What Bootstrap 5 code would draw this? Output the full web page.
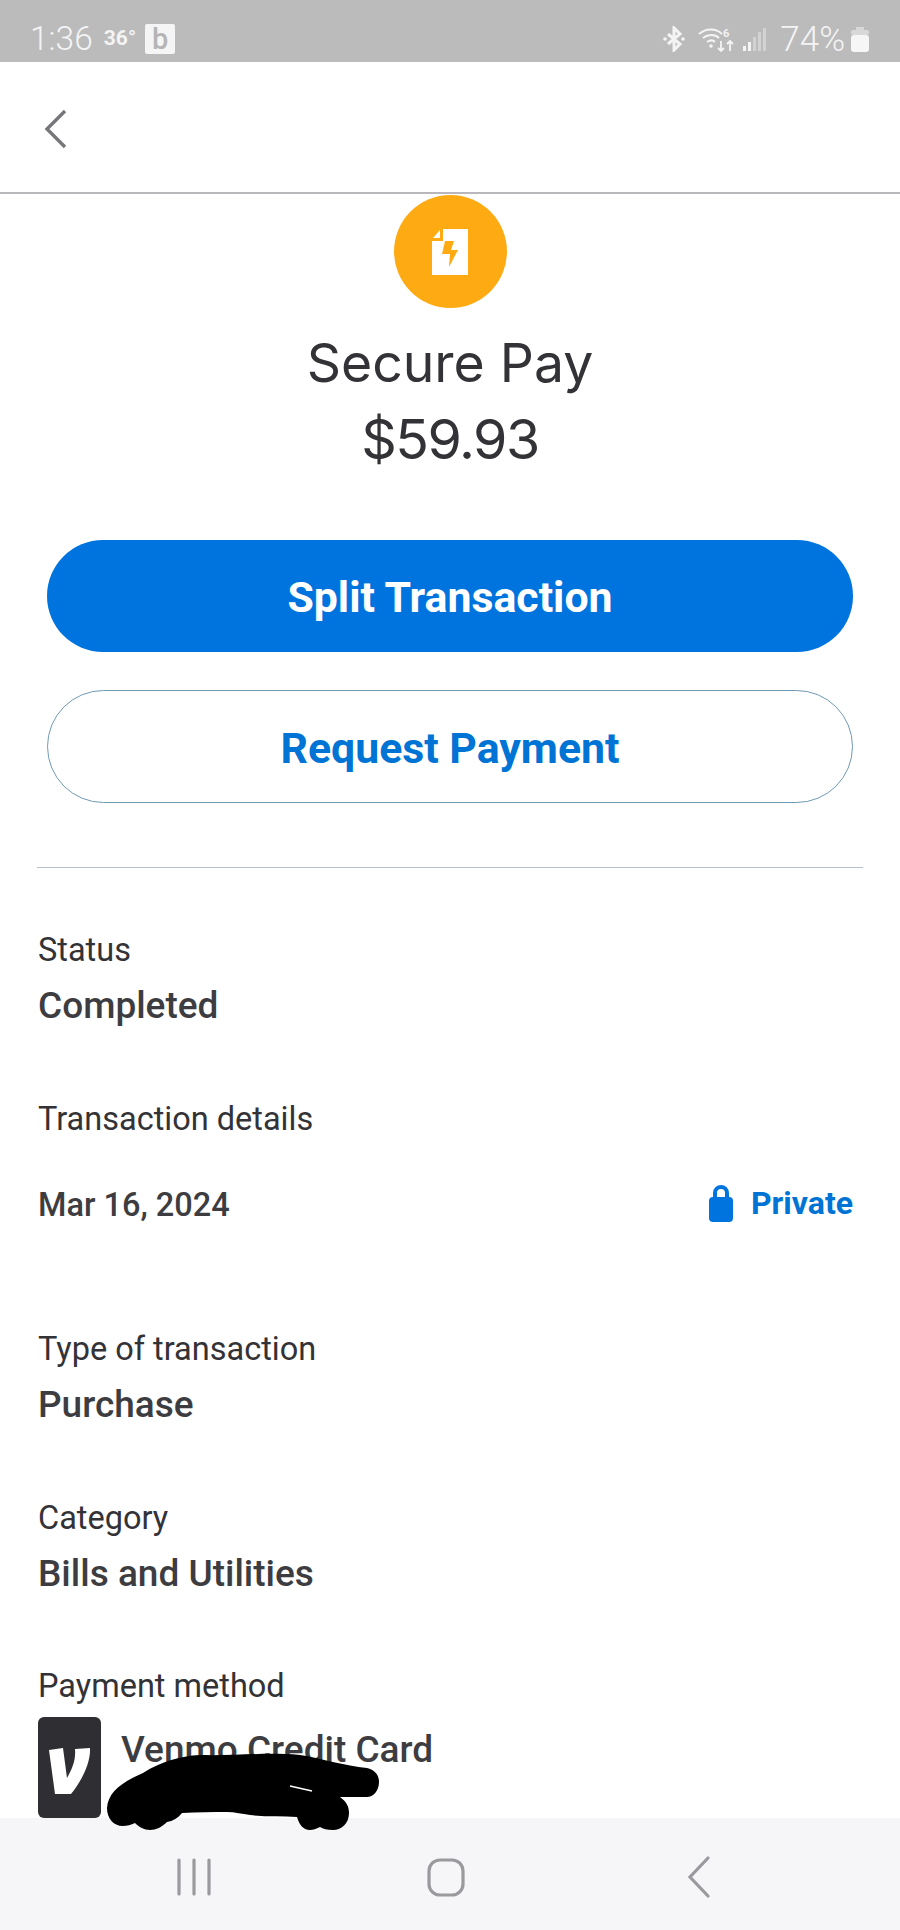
<!DOCTYPE html>
<html lang="en">
<head>
  <meta charset="UTF-8" />
  <meta name="viewport" content="width=device-width, initial-scale=1.0">
  <title>Secure Pay</title>
  <link href="https://cdn.jsdelivr.net/npm/bootstrap@5.3.3/dist/css/bootstrap.min.css" rel="stylesheet">
  <style>
    body { margin: 0; background: #fff; font-family: Roboto, "Liberation Sans", sans-serif; color: #333337; }
    .phone-screen { width: 900px; height: 1930px; overflow: hidden; position: relative; }
    .status-strip { height: 62px; background: #bbbbbb; color: #f4f4f4; padding: 16px 31px 0 30px; flex: none; }
    .clock { font-size: 33.5px; font-weight: 300; margin-right: 11px; line-height: 1; }
    .temp { font-size: 21px; font-weight: 700; margin-right: 9px; }
    .b-tile { width: 30px; height: 30px; background: #f5f5f5; color: #b5b5b5; font-size: 29px; font-weight: 500; line-height: 30px; text-align: center; border-radius: 2px; }
    .wifi-icon { margin: 0 8px 0 13px; }
    .battery-text { font-size: 35px; font-weight: 300; line-height: 1; margin: 0 6px 0 14px; }
    .top-row { height: 132px; border-bottom: 2px solid #b8b8bc; padding: 4px 0 0 44px; flex: none; }
    .main-area { min-height: 0; }
    .merchant-circle { width: 113px; height: 113px; background: #fdaa13; margin: 1px auto 0; }
    .merchant-name { font-family: Inter, sans-serif; font-size: 53.5px; line-height: 60px; margin: 25px 0 0; font-weight: 400; }
    .amount { font-family: Inter, sans-serif; font-size: 55.5px; line-height: 60px; margin: 16px 0 0; letter-spacing: -1.5px; }
    .action-wrap { padding: 0 47px; margin-top: 71px; }
    .pay-btn { height: 112px; font-size: 42.8px; font-weight: 700; background: #0074de; border: 0; color: #fff; display: block; line-height: 115px; padding: 0; }
    .pay-btn:hover { background: #0074de; color: #fff; }
    .ask-btn { height: 113px; font-size: 42.8px; font-weight: 700; background: #fff; border: 1px solid #6f9ab5; color: #0074d4; line-height: 114px; padding: 0; margin-top: 38px; display: block; }
    .ask-btn:hover { background: #fff; color: #0074d4; }
    .split-rule { margin: 64px 37px 0; height: 1px; background: #b4c2cc; }
    .detail-list { padding: 0 38px; }
    .label-text { font-size: 32.5px; line-height: 36px; }
    .value-text { font-size: 37px; font-weight: 500; line-height: 44px; margin-top: 16px; color: #3d3d41; }
    .status-block { margin-top: 64px; }
    .details-block { margin-top: 73px; }
    .date-row { margin-top: 50px; font-size: 32.5px; line-height: 36px; font-weight: 500; padding-right: 9px; color: #3d3d41; }
    .privacy { color: #0074d4; font-weight: 700; font-size: 32px; gap: 18px; margin-top: -4px; }
    .type-block { margin-top: 108px; }
    .cat-block { margin-top: 73px; }
    .pay-block { margin-top: 72px; }
    .method-row { margin-top: 13px; }
    .v-tile { width: 63px; height: 101px; background: #2f2f33; border-radius: 6px; margin-right: 20px; padding-top: 7px; }
    .card-name { font-size: 37px; font-weight: 500; line-height: 42px; padding-top: 12px; color: #3d3d41; }
    .nav-strip { height: 112px; background: #f6f6f8; flex: none; position: relative; z-index: 1; padding-top: 8px; }
    .scribble { position: absolute; left: 0; top: 0; z-index: 2; pointer-events: none; }
  </style>
</head>
<body>
  <div class="phone-screen d-flex flex-column">
    <div class="status-strip d-flex align-items-center justify-content-between">
      <div class="d-flex align-items-center">
        <span class="clock">1:36</span>
        <span class="temp">36°</span>
        <span class="b-tile">b</span>
      </div>
      <div class="d-flex align-items-center">
        <svg width="22" height="26" viewBox="0 0 22 26" fill="none" stroke="#f4f4f4" stroke-width="3"><path d="M5 8l12 10-6 6V2l6 6L5 18"/><circle cx="2" cy="13" r="1.8" fill="#f4f4f4" stroke="none"/><circle cx="20" cy="13" r="1.8" fill="#f4f4f4" stroke="none"/></svg>
        <svg class="wifi-icon" width="37" height="26" viewBox="0 0 37 26" fill="none" stroke="#f4f4f4"><path stroke-width="2" d="M1 8c7-6 17-6 23 0M5 12c5-4 12-4 16 0M9 16c3-2 6-2 8 0"/><circle cx="13" cy="20" r="1.8" fill="#f4f4f4" stroke="none"/><path stroke-width="1.8" d="M23 15v10m-3-3l3 3 3-3M32 25V15m-3 3l3-3 3 3"/><text x="25" y="11" font-size="11" font-weight="700" fill="#f4f4f4" stroke="none" font-family="Roboto">6</text></svg>
        <svg width="23" height="25" viewBox="0 0 23 25"><rect x="0" y="19" width="3" height="5" fill="#f4f4f4"/><rect x="5" y="15" width="3" height="9" fill="#f4f4f4"/><rect x="10" y="10" width="3" height="14" fill="#d2d2d2"/><rect x="15" y="5" width="3" height="19" fill="#d2d2d2"/><rect x="20" y="1" width="3" height="23" fill="#d2d2d2"/></svg>
        <span class="battery-text">74%</span>
        <svg width="18" height="25" viewBox="0 0 18 25"><path fill="#d8d8d8" d="M5 0h8v3H5z"/><rect y="3" width="18" height="5" rx="2" fill="#d8d8d8"/><rect y="8" width="18" height="17" rx="3" fill="#f6f6f6"/></svg>
      </div>
    </div>

    <div class="top-row d-flex align-items-center">
      <svg width="24" height="40" viewBox="0 0 24 40" fill="none" stroke="#77777b" stroke-width="3.4"><path d="M21 2L3 20l18 18"/></svg>
    </div>

    <div class="main-area flex-grow-1 overflow-hidden">
      <div class="text-center">
        <div class="merchant-circle rounded-circle d-flex align-items-center justify-content-center">
          <svg width="38" height="48" viewBox="0 0 38 48"><path fill="#fff" d="M12 1h25v46H1V13h11z"/><path fill="#fff" d="M2 10L9 2v8z"/><path fill="#fdaa13" d="M14 13h9l-3 9h7L18 39l1-13h-8z"/></svg>
        </div>
        <h1 class="merchant-name">Secure Pay</h1>
        <div class="amount">$59.93</div>
      </div>

      <div class="action-wrap">
        <a href="#" class="btn pay-btn rounded-pill w-100">Split Transaction</a>
        <a href="#" class="btn ask-btn rounded-pill w-100">Request Payment</a>
      </div>

      <div class="split-rule"></div>

      <div class="detail-list">
        <div class="status-block">
          <div class="label-text">Status</div>
          <div class="value-text">Completed</div>
        </div>
        <div class="details-block">
          <div class="label-text">Transaction details</div>
          <div class="date-row d-flex justify-content-between align-items-center">
            <span>Mar 16, 2024</span>
            <span class="privacy d-flex align-items-center">
              <svg width="24" height="38" viewBox="0 0 24 38"><path fill="none" stroke="#0074de" stroke-width="4" d="M6 16V9a6 6 0 0 1 12 0v7"/><rect y="13" width="24" height="25" rx="4" fill="#0074de"/></svg>
              Private
            </span>
          </div>
        </div>
        <div class="type-block">
          <div class="label-text">Type of transaction</div>
          <div class="value-text">Purchase</div>
        </div>
        <div class="cat-block">
          <div class="label-text">Category</div>
          <div class="value-text">Bills and Utilities</div>
        </div>
        <div class="pay-block">
          <div class="label-text">Payment method</div>
          <div class="method-row d-flex">
            <div class="v-tile d-flex align-items-center justify-content-center flex-none">
              <svg width="44" height="48" viewBox="0 0 44 48"><path fill="#fff" d="M1 3l14-2 4 30C24 22 28 13 27 2l15-1c1 15-9 34-19 46H7z"/></svg>
            </div>
            <div class="card-name">Venmo Credit Card</div>
          </div>
        </div>
      </div>
    </div>

    <div class="nav-strip d-flex align-items-center">
      <svg width="900" height="60" viewBox="0 0 900 60" fill="none" stroke="#9a9a9e" stroke-width="3.2" stroke-linecap="round">
        <path d="M179 12v34M194 12v34M209 12v34"/>
        <rect x="429" y="12" width="34" height="35" rx="11"/>
        <path d="M708 10L690 29l18 19"/>
      </svg>
    </div>

    <svg class="scribble" width="900" height="1930" viewBox="0 0 900 1930" fill="#000">
      <path d="M107 1808C108 1792 122 1782 143 1773C160 1762 180 1756 200 1755C235 1756 265 1752 300 1755C320 1758 345 1766 367 1768C375 1770 379 1775 379 1782C379 1791 373 1797 367 1797L340 1797C347 1802 349 1807 349 1813C349 1823 342 1830 333 1830C327 1830 323 1829 320 1827C316 1829 313 1830 310 1830C303 1830 299 1824 297 1817C282 1816 265 1817 250 1815C242 1814 235 1812 227 1812C212 1812 197 1812 182 1813C178 1818 173 1821 167 1822C162 1827 156 1830 150 1830C144 1830 139 1827 135 1823C131 1825 127 1826 123 1826C113 1826 107 1818 107 1808Z"/>
      <path d="M290 1786L312 1791" stroke="#fff" stroke-width="1.5"/>
    </svg>
  </div>
  <script src="https://cdn.jsdelivr.net/npm/bootstrap@5.3.3/dist/js/bootstrap.bundle.min.js"></script>
</body>
</html>
